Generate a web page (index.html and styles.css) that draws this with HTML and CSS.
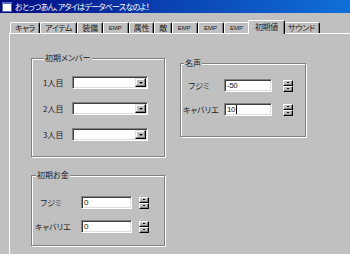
FILE: index.html
```html
<!DOCTYPE html>
<html lang="ja">
  <head>
    <meta charset="UTF-8" />
    <title>おとっつあん、アタイはデータベースなのよ！</title>
    <link rel="stylesheet" href="styles.css">
  </head>
  <body>
    <div class="titlebar">
      <span class="app-icon"></span>
      <span class="title">おとっつあん、アタイはデータベースなのよ！</span>
    </div>

    <div class="tabs">
      <div class="tab">キャラ</div>
      <div class="tab">アイテム</div>
      <div class="tab">装備</div>
      <div class="tab tab-latin">EMP</div>
      <div class="tab">属性</div>
      <div class="tab">敵</div>
      <div class="tab tab-latin">EMP</div>
      <div class="tab tab-latin">EMP</div>
      <div class="tab tab-latin">EMP</div>
      <div class="tab active">初期値</div>
      <div class="tab">サウンド</div>
    </div>

    <div class="panel">
      <div class="col">
        <fieldset class="group members">
          <legend>初期メンバー</legend>
          <div class="row">
            <span class="label">1人目</span>
            <div class="combo"><span class="combo-btn"></span></div>
          </div>
          <div class="row">
            <span class="label">2人目</span>
            <div class="combo"><span class="combo-btn"></span></div>
          </div>
          <div class="row">
            <span class="label">3人目</span>
            <div class="combo"><span class="combo-btn"></span></div>
          </div>
        </fieldset>

        <fieldset class="group money">
          <legend>初期お金</legend>
          <div class="row">
            <span class="label">フジミ</span>
            <div class="field">0</div>
            <div class="spin"><span></span><span></span></div>
          </div>
          <div class="row">
            <span class="label">キャバリエ</span>
            <div class="field">0</div>
            <div class="spin"><span></span><span></span></div>
          </div>
        </fieldset>
      </div>

      <div class="col">
        <fieldset class="group fame">
          <legend>名声</legend>
          <div class="row">
            <span class="label">フジミ</span>
            <div class="field">-50</div>
            <div class="spin"><span></span><span></span></div>
          </div>
          <div class="row">
            <span class="label">キャバリエ</span>
            <div class="field">10<i class="caret"></i></div>
            <div class="spin"><span></span><span></span></div>
          </div>
        </fieldset>
      </div>
    </div>
  </body>
</html>
```

FILE: styles.css
```css
body {
  margin: 0;
  width: 350px;
  height: 254px;
  overflow: hidden;
  background-color: #c0c0c0;
  color: #000;
  font-family: "Noto Sans CJK JP", sans-serif;
  font-size: 8px;
  font-feature-settings: "palt";
}

/* title bar */
.titlebar {
  display: flex;
  align-items: center;
  height: 13px;
  background: linear-gradient(to right, #000a80, #0a3fb0 45%, #1070d8);
}

.app-icon {
  width: 8px;
  height: 7px;
  margin-left: 2px;
  background-color: #fff;
  border: 1px solid #5070c8;
  border-top-width: 2px;
}

.title {
  margin-left: 3px;
  color: #fff;
  font-size: 8px;
  letter-spacing: -0.7px;
  line-height: 13px;
}

/* tabs */
.tabs {
  display: flex;
  align-items: flex-end;
  height: 13px;
  margin-top: 7px;
  padding-left: 10px;
}

.tab {
  box-sizing: border-box;
  height: 11px;
  padding: 0 4px;
  line-height: 10px;
  letter-spacing: -0.3px;
  color: #202020;
  border-top: 1px solid #fff;
  border-left: 1px solid #fff;
  border-right: 1px solid #000;
  border-radius: 2px 2px 0 0;
  box-shadow: inset -1px 0 0 #808080;
}

.tab-latin {
  font-family: "Liberation Sans", sans-serif;
  font-size: 6px;
  letter-spacing: 0;
  padding: 0 6px 0 5px;
}

.tab.active {
  position: relative;
  z-index: 1;
  height: 14px;
  margin: 0 -2px -1px;
  padding: 0 6px;
  line-height: 11px;
  background-color: #c0c0c0;
}

/* tab page */
.panel {
  display: grid;
  grid-template-columns: 134px 126px;
  column-gap: 15px;
  align-items: start;
  height: 220px;
  margin-left: 9px;
  padding-left: 21px;
  border-top: 1px solid #fff;
  border-left: 1px solid #fff;
  overflow: hidden;
}

.col {
  display: flex;
  flex-direction: column;
  gap: 13px;
}

/* group boxes */
.group {
  margin: 0;
  padding: 0;
  min-inline-size: 0;
  color: #202020;
  border: 1px solid #808080;
  box-shadow: inset 1px 1px 0 #fff, 1px 1px 0 #fff;
}

.group legend {
  margin-left: 1px;
  padding: 0 1px;
  line-height: 10px;
  background-color: #c0c0c0;
}

.members {
  margin-top: 19px;
  padding: 13px 0 15px 11px;
  display: flex;
  flex-direction: column;
  gap: 13px;
}

.members .label {
  width: 29px;
}

.money {
  padding: 16px 0 12px 3px;
  display: flex;
  flex-direction: column;
  gap: 11px;
}

.fame {
  margin-top: 24px;
  padding: 11px 0 20px 2px;
  display: flex;
  flex-direction: column;
  gap: 11px;
}

.row {
  display: flex;
  align-items: center;
}

.money .label,
.fame .label {
  width: 32px;
  text-align: center;
  white-space: nowrap;
}

/* sunken controls */
.combo,
.field {
  box-sizing: border-box;
  height: 13px;
  background-color: #fff;
  border: 1px solid;
  border-color: #808080 #fff #fff #808080;
  box-shadow: inset 1px 1px 0 #404040, inset -1px -1px 0 #dfdfdf;
}

.combo {
  display: flex;
  justify-content: flex-end;
  width: 76px;
  padding: 1px;
}

.combo-btn {
  box-sizing: border-box;
  display: flex;
  align-items: center;
  justify-content: center;
  width: 11px;
  height: 9px;
  background-color: #c0c0c0;
  border: 1px solid;
  border-color: #dfdfdf #000 #000 #dfdfdf;
  box-shadow: inset -1px -1px 0 #808080, inset 1px 1px 0 #fff;
}

.combo-btn::after {
  content: "";
  border-top: 2px solid #000;
  border-left: 2px solid transparent;
  border-right: 2px solid transparent;
}

.field {
  display: flex;
  align-items: center;
  padding-left: 2px;
  font-family: "Liberation Sans", sans-serif;
  font-size: 8px;
  letter-spacing: -0.4px;
}

.money .field {
  width: 51px;
  margin-left: 14px;
}

.fame .field {
  width: 48px;
  margin-left: 9px;
}

.caret {
  width: 1px;
  height: 9px;
  margin-left: 1px;
  background-color: #000;
}

/* spin buttons */
.spin {
  display: flex;
  flex-direction: column;
  margin-left: 7px;
}

.fame .spin {
  margin-left: 11px;
}

.spin span {
  box-sizing: border-box;
  display: flex;
  align-items: center;
  justify-content: center;
  width: 10px;
  height: 6px;
  border: 1px solid;
  border-color: #fff #000 #000 #fff;
  box-shadow: inset -1px -1px 0 #808080;
}

.spin span::after {
  content: "";
  width: 2px;
  height: 1px;
  background-color: #000;
}
```
